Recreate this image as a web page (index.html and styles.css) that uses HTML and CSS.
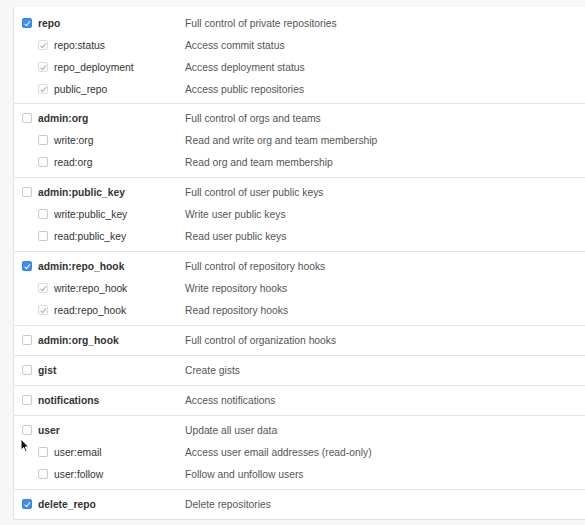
FILE: index.html
```html
<!DOCTYPE html>
<html>
<head>
<meta charset="utf-8">
<link rel="stylesheet" href="styles.css">
</head>
<body>
<div class="panel">
  <div class="group">
    <div class="row top"><span class="cb on"></span><span class="name">repo</span><span class="desc">Full control of private repositories</span></div>
    <div class="row sub"><span class="cb dis"></span><span class="name">repo:status</span><span class="desc">Access commit status</span></div>
    <div class="row sub"><span class="cb dis"></span><span class="name">repo_deployment</span><span class="desc">Access deployment status</span></div>
    <div class="row sub"><span class="cb dis"></span><span class="name">public_repo</span><span class="desc">Access public repositories</span></div>
  </div>
  <div class="group">
    <div class="row top"><span class="cb"></span><span class="name">admin:org</span><span class="desc">Full control of orgs and teams</span></div>
    <div class="row sub"><span class="cb"></span><span class="name">write:org</span><span class="desc">Read and write org and team membership</span></div>
    <div class="row sub"><span class="cb"></span><span class="name">read:org</span><span class="desc">Read org and team membership</span></div>
  </div>
  <div class="group">
    <div class="row top"><span class="cb"></span><span class="name">admin:public_key</span><span class="desc">Full control of user public keys</span></div>
    <div class="row sub"><span class="cb"></span><span class="name">write:public_key</span><span class="desc">Write user public keys</span></div>
    <div class="row sub"><span class="cb"></span><span class="name">read:public_key</span><span class="desc">Read user public keys</span></div>
  </div>
  <div class="group">
    <div class="row top"><span class="cb on"></span><span class="name">admin:repo_hook</span><span class="desc">Full control of repository hooks</span></div>
    <div class="row sub"><span class="cb dis"></span><span class="name">write:repo_hook</span><span class="desc">Write repository hooks</span></div>
    <div class="row sub"><span class="cb dis"></span><span class="name">read:repo_hook</span><span class="desc">Read repository hooks</span></div>
  </div>
  <div class="group">
    <div class="row top"><span class="cb"></span><span class="name">admin:org_hook</span><span class="desc">Full control of organization hooks</span></div>
  </div>
  <div class="group">
    <div class="row top"><span class="cb"></span><span class="name">gist</span><span class="desc">Create gists</span></div>
  </div>
  <div class="group">
    <div class="row top"><span class="cb"></span><span class="name">notifications</span><span class="desc">Access notifications</span></div>
  </div>
  <div class="group">
    <div class="row top"><span class="cb"></span><span class="name">user</span><span class="desc">Update all user data</span></div>
    <div class="row sub"><span class="cb"></span><span class="name">user:email</span><span class="desc">Access user email addresses (read-only)</span></div>
    <div class="row sub"><span class="cb"></span><span class="name">user:follow</span><span class="desc">Follow and unfollow users</span></div>
  </div>
  <div class="group">
    <div class="row top"><span class="cb on"></span><span class="name">delete_repo</span><span class="desc">Delete repositories</span></div>
  </div>
  <svg class="cursor" width="10" height="15" viewBox="0 0 10 15"><path d="M1 1 L1 12 L3.6 9.6 L5.4 13.6 L7 12.9 L5.3 9 L8.6 9 Z" fill="#111" stroke="#fff" stroke-width="1" stroke-linejoin="round"/></svg>
</div>
</body>
</html>
```
FILE: styles.css
```css
html, body {
  margin: 0;
  padding: 0;
  background: #f7f7f7;
  overflow: hidden;
}
body {
  padding: 7px 0 0 13px;
  font-family: "Liberation Sans", Arial, Helvetica, sans-serif;
  font-size: 10.3px;
  color: #333;
}
.panel {
  position: relative;
  background: #fff;
  border-left: 1px solid #e3e3e3;
  border-bottom: 1px solid #e1e1e1;
}
.group {
  padding: 3px 0 4px;
  border-top: 1px solid #e6e6e6;
}
.group:first-child {
  border-top: none;
  padding: 5px 0 3px;
}
.row {
  height: 22px;
  display: flex;
  align-items: center;
  padding-left: 8px;
}
.row.sub {
  padding-left: 24px;
}
.cb {
  box-sizing: border-box;
  width: 10px;
  height: 10px;
  border: 1px solid #c9c9c9;
  border-radius: 2px;
  background: #fff;
  margin-right: 6px;
  flex: none;
  position: relative;
}
.cb.on {
  background: #3d8ef3;
  border-color: #3483ea;
}
.cb.on::after, .cb.dis::after {
  content: "";
  position: absolute;
  left: 2.6px;
  top: 0.6px;
  width: 2.2px;
  height: 4.6px;
  border-right: 1.1px solid #fff;
  border-bottom: 1.1px solid #fff;
  transform: rotate(40deg);
}
.cb.dis {
  border-color: #dcdcdc;
  background: #fcfcfc;
}
.cb.dis::after {
  border-color: #aaa;
}
.name {
  flex: none;
}
.top .name {
  width: 147px;
  font-weight: bold;
  color: #333;
}
.sub .name {
  width: 131px;
  color: #333;
}
.desc {
  color: #555;
}
.cursor {
  position: absolute;
  left: 6px;
  top: 431px;
}
```
